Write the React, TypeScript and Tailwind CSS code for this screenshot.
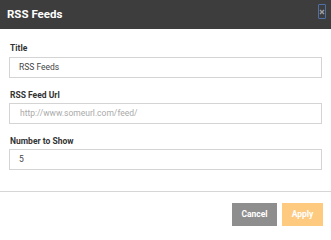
import React from "react";

export default function App() {
  const font = { fontFamily: "Roboto, 'Liberation Sans', sans-serif" };
  return (
    <div className="w-[331px] h-[233px] bg-white overflow-hidden" style={font}>
      <div className="h-[29px] bg-[#3d3d3d] flex items-start justify-between pl-[7px] pr-[5px]">
        <span className="text-white text-[11.5px] font-bold leading-[29px]">RSS Feeds</span>
        <span className="mt-[4px] w-[8px] h-[15px] border border-[#4f6fa8] rounded-[1px] flex items-center justify-center">
          <svg width="6" height="6" viewBox="0 0 6 6">
            <path d="M1 1L5 5M5 1L1 5" stroke="#a0a0a0" strokeWidth="1.4" />
          </svg>
        </span>
      </div>
      <div className="px-[9px] pt-[13px] pb-[21px] flex flex-col">
        <label className="text-[8.5px] leading-[12px] font-bold text-[#333] pl-[1px] mb-[3px]">Title</label>
        <div className="h-[21px] border border-[#d4d4d4] flex items-center px-[9px] text-[8.5px] text-[#444]">RSS Feeds</div>
        <label className="mt-[11px] text-[8.5px] leading-[12px] font-bold text-[#333] pl-[1px] mb-[2px]">RSS Feed Url</label>
        <div className="h-[21px] border border-[#d4d4d4] flex items-center px-[10px] text-[8.5px] text-[#aaaaaa]">http://www.someurl.com/feed/</div>
        <label className="mt-[11px] text-[8.5px] leading-[12px] font-bold text-[#333] pl-[1px] mb-[2px]">Number to Show</label>
        <div className="h-[21px] border border-[#d4d4d4] flex items-center px-[9px] text-[8.5px] text-[#444]">5</div>
      </div>
      <div className="border-t border-[#d6d6d6] flex justify-end gap-[5px] pt-[11px] pr-[8px]">
        <button className="w-[45px] h-[23px] bg-[#8e8e8e] text-white text-[8.5px] font-bold">Cancel</button>
        <button className="w-[41px] h-[23px] bg-[#fdca80] text-white text-[8.5px] font-bold">Apply</button>
      </div>
    </div>
  );
}
